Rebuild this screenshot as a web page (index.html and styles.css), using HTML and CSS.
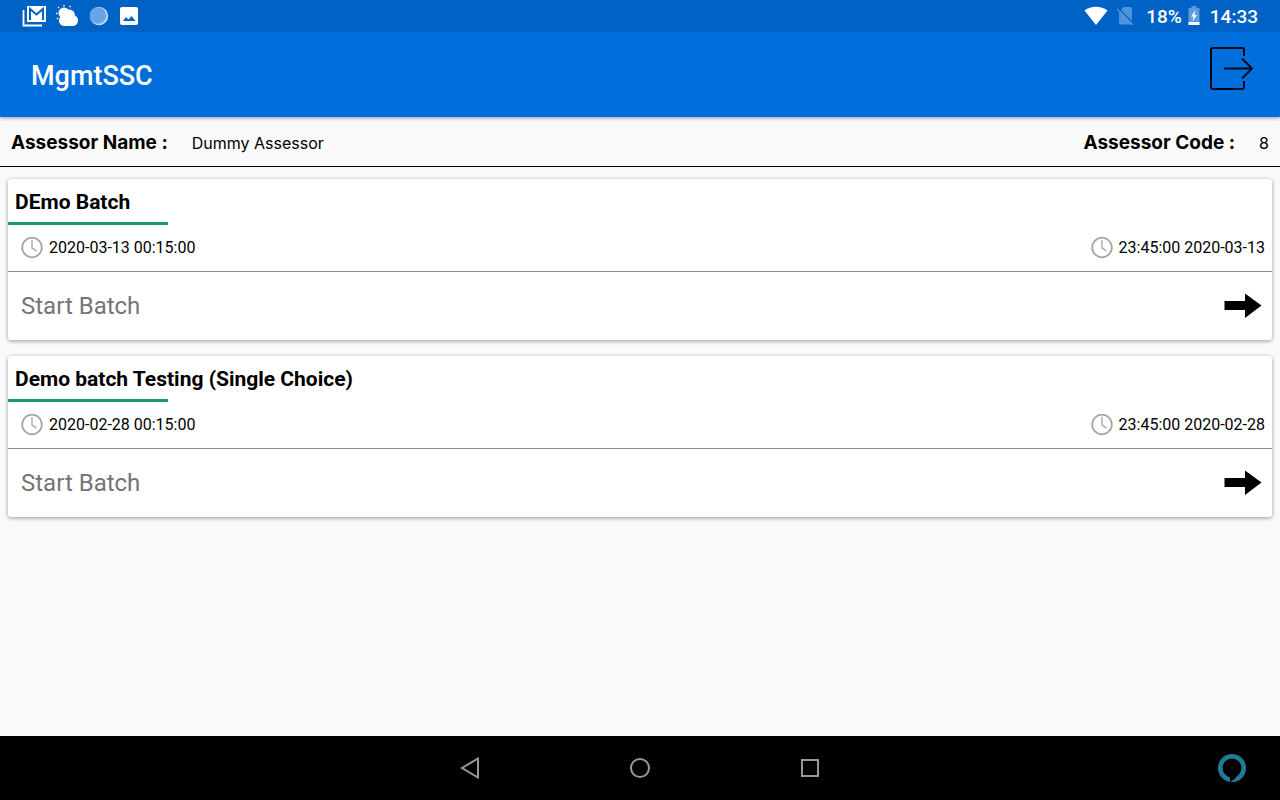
FILE: index.html
```html
<!DOCTYPE html>
<html lang="en">
<head>
    <meta charset="utf-8">
    <meta name="viewport" content="width=device-width, initial-scale=1.0">
    <title>MgmtSSC</title>
    <link rel="stylesheet" href="styles.css">
</head>

<body>

    <!-- shared icons -->
    <svg class="defs" width="0" height="0">
        <symbol id="clock" viewBox="0 0 22 22">
            <circle cx="11" cy="10.500" r="9.800" fill="none" stroke="#a6a6a6" stroke-width="1.800"/>
            <path d="M11 3V11L15.500 14" fill="none" stroke="#b4b4b4" stroke-width="1.600"/>
        </symbol>
        <symbol id="arrow" viewBox="0 0 38 26">
            <path d="M0.500 8H21V0.500L37.500 12.500L21 25V17H0.500Z"/>
        </symbol>
    </svg>

    <!-- status bar -->
    <div class="status">
        <div class="status-left">
            <svg width="24" height="22" viewBox="0 0 24 22">
                <path d="M1.500 5V20.500H20" fill="none" stroke="#fff" stroke-width="1.800"/>
                <path d="M5 1H24V17H5Z" fill="#fff"/>
                <path d="M8 15V4L14.500 9.500L21 4V15" fill="none" stroke="#0062c4" stroke-width="2"/>
            </svg>
            <svg width="24" height="22" viewBox="0 0 24 22">
                <circle cx="8" cy="8" r="5.500" fill="#fff"/>
                <circle cx="13" cy="10.500" r="6" fill="#fff"/>
                <rect x="3" y="10" width="19" height="11" rx="5.500" fill="#fff"/>
                <path d="M8 0V1.500M2 2L3 3M0 8.500H1.500M13.500 2L14.500 1M1 14L2 13" stroke="#fff" stroke-width="1.500"/>
            </svg>
            <svg width="20" height="20" viewBox="0 0 20 20">
                <circle cx="9" cy="10" r="9.200" fill="#b5d6f6"/>
                <circle cx="8" cy="9.500" r="8.200" fill="#66a5e6"/>
            </svg>
            <svg width="18" height="18" viewBox="0 0 18 18">
                <rect width="18" height="18" rx="2" fill="#fff"/>
                <path d="M3 14L6 10L8.500 12.500L11.500 9L15.500 14Z" fill="#0062c4"/>
            </svg>
        </div>
        <div class="status-right">
            <svg width="24" height="20" viewBox="0 0 24 20">
                <path d="M0.500 4.500C7 -0.500 17 -0.500 23.500 4.500L12 19Z" fill="#fff"/>
            </svg>
            <svg class="sim" width="18" height="20" viewBox="0 0 18 20">
                <path d="M7.500 1H14Q16 1 16 3V18.500H4Q3 18.500 3 17V6Z" fill="#4d92dc"/>
                <path d="M2 2L18 18" stroke="#0062c4" stroke-width="1.500"/>
                <path d="M1 3L17 19" stroke="#4d92dc" stroke-width="1.500"/>
            </svg>
            <span class="percent">18%</span>
            <svg class="battery" width="12" height="20" viewBox="0 0 12 20">
                <path d="M3.500 0H8.500V2H11.500V19H0.500V2H3.500Z" fill="#5a9ce0"/>
                <path d="M0.500 16H11.500V19H0.500Z" fill="#fff"/>
                <path d="M7.500 4L3 10.500H5.500L4.500 15.500L9 9H6.500Z" fill="#fff"/>
            </svg>
            <span>14:33</span>
        </div>
    </div>

    <!-- app bar -->
    <header class="appbar">
        <h1>MgmtSSC</h1>
        <button type="button" class="logout" aria-label="Log out">
            <svg width="44" height="44" viewBox="0 0 44 44" fill="none" stroke="#000a1c" stroke-width="2">
                <path d="M34 10V3.500Q34 2 32 2H3Q1 2 1 4V41Q1 43 3 43H32Q34 43 34 41V35"/>
                <path d="M14 22.500H42M32 12.500L42 22.500L32 32.500"/>
            </svg>
        </button>
    </header>

    <!-- assessor details -->
    <div class="assessor">
        <div><strong>Assessor Name :</strong><span>Dummy Assessor</span></div>
        <div><strong>Assessor Code :</strong><span>8</span></div>
    </div>

    <!-- batch list -->
    <main>
        <section class="card">
            <h2>DEmo Batch</h2>
            <div class="dates">
                <span><svg width="22" height="22"><use href="#clock"/></svg>2020-03-13 00:15:00</span>
                <span><svg width="22" height="22"><use href="#clock"/></svg>23:45:00 2020-03-13</span>
            </div>
            <button type="button" class="start">
                Start Batch
                <svg width="38" height="26"><use href="#arrow"/></svg>
            </button>
        </section>

        <section class="card">
            <h2>Demo batch Testing (Single Choice)</h2>
            <div class="dates">
                <span><svg width="22" height="22"><use href="#clock"/></svg>2020-02-28 00:15:00</span>
                <span><svg width="22" height="22"><use href="#clock"/></svg>23:45:00 2020-02-28</span>
            </div>
            <button type="button" class="start">
                Start Batch
                <svg width="38" height="26"><use href="#arrow"/></svg>
            </button>
        </section>
    </main>

    <!-- navigation bar -->
    <nav>
        <span></span>
        <div class="keys">
            <button type="button" aria-label="Back">
                <svg width="20" height="22" viewBox="0 0 20 22"><path d="M18 1.500V20.500L2 11Z"/></svg>
            </button>
            <button type="button" aria-label="Home">
                <svg width="20" height="20" viewBox="0 0 20 20"><circle cx="10" cy="10" r="9"/></svg>
            </button>
            <button type="button" aria-label="Recent apps">
                <svg width="20" height="20" viewBox="0 0 20 20"><rect x="2" y="2" width="16" height="16"/></svg>
            </button>
        </div>
        <button type="button" class="assistant" aria-label="Assistant">
            <svg width="28" height="28" viewBox="0 0 28 28">
                <circle cx="14" cy="14" r="11.700" fill="none" stroke="#237a98" stroke-width="4.600"/>
                <path d="M12 22.500V28L16.500 25L20 21Z" fill="#000"/>
                <path d="M13 28C18 26 21 23 22.500 18L27 19Q23 28 13 28Z" fill="#237a98"/>
            </svg>
        </button>
    </nav>

</body>
</html>
```
FILE: styles.css
```css
* { box-sizing: border-box; }

body {
    display: flex;
    flex-direction: column;
    min-height: 100vh;
    margin: 0;
    color: #000;
    background-color: #fafafa;
    font-family: Roboto, sans-serif;
}

h1, h2 { margin: 0; }
svg { display: block; flex: none; }

button {
    padding: 0;
    border: none;
    background: none;
    font-family: inherit;
    cursor: pointer;
}

.defs { position: absolute; }

/* status bar */
.status {
    display: flex;
    justify-content: space-between;
    height: 32px;
    padding: 0 22px;
    color: #fff;
    background-color: #0062c4;
    font-size: 19px;
    font-weight: 500;
}

.status-left, .status-right { display: flex; align-items: center; }
.status-left { gap: 10px; }
.sim { margin-left: 8px; }
.percent { margin-left: 12px; }
.battery { margin: 0 10px 0 6px; }

/* app bar */
.appbar {
    display: flex;
    justify-content: space-between;
    align-items: flex-start;
    height: 85px;
    padding: 14px 26px 0 31px;
    color: #fff;
    background-color: #006fdc;
    box-shadow: 0 1px 4px rgba(0, 0, 0, 0.4);
    clip-path: inset(0 0 -8px);
}

.appbar h1 {
    padding-top: 14px;
    font-size: 27px;
    font-weight: 500;
    line-height: 32px;
}

/* assessor details */
.assessor {
    display: flex;
    justify-content: space-between;
    height: 50px;
    padding: 0 11px;
    border-bottom: 1px solid #000;
    font-family: Inter, sans-serif;
    font-size: 16px;
    line-height: 50px;
}

.assessor div { display: flex; align-items: baseline; gap: 24px; }
.assessor strong { font-size: 19px; line-height: 52px; }

/* batch list */
main {
    display: flex;
    flex: 1;
    flex-direction: column;
    gap: 16px;
    padding: 12px 8px;
}

.card {
    border-radius: 3px;
    background-color: #fff;
    box-shadow: 0 1px 4px rgba(0, 0, 0, 0.4);
}

.card h2 {
    padding: 3px 7px 0;
    font-size: 21px;
    font-weight: 700;
    line-height: 40px;
}

/* short green rule under the batch name */
.dates::before {
    content: "";
    position: absolute;
    top: 0;
    left: 0;
    width: 160px;
    height: 3px;
    background-color: #1d9670;
}

.dates {
    position: relative;
    display: flex;
    justify-content: space-between;
    height: 50px;
    padding: 2px 7px 0 13px;
    border-bottom: 1px solid #8c8c8c;
    font-size: 16px;
}

.dates span { display: flex; align-items: center; gap: 6px; }

.start {
    display: flex;
    justify-content: space-between;
    align-items: center;
    width: 100%;
    height: 68px;
    padding: 0 10px 0 13px;
    color: #757575;
    font-size: 24px;
}

.start svg { fill: #000; }

/* navigation bar */
nav {
    display: grid;
    grid-template-columns: 1fr auto 1fr;
    align-items: center;
    height: 64px;
    padding: 0 34px;
    background-color: #000;
}

.keys { display: flex; align-items: center; gap: 150px; }
.keys svg { fill: none; stroke: #979797; stroke-width: 2; }
.assistant { justify-self: end; }
```
